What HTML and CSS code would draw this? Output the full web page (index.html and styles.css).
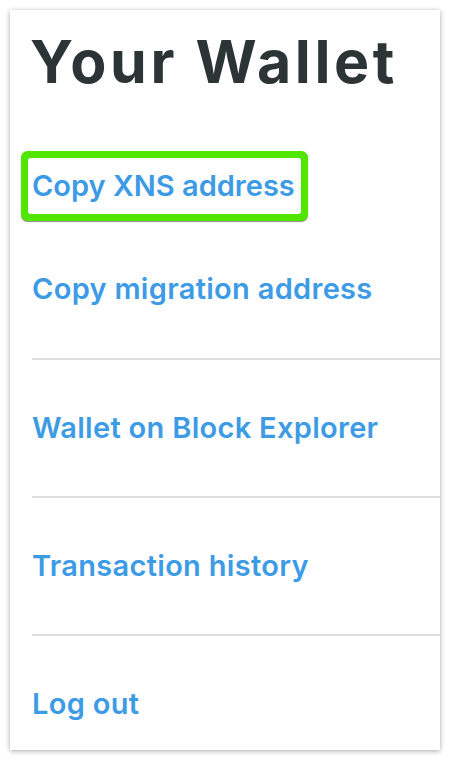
FILE: index.html
```html
<!DOCTYPE html>
<html lang="en">
<head>
<meta charset="utf-8">
<title>Your Wallet</title>
<link rel="stylesheet" href="styles.css">
</head>
<body>
<div class="card">
  <h1 class="title">Your Wallet</h1>
  <ul class="menu">
    <li class="menu-group">
      <a class="menu-link menu-link--focused" href="#">Copy XNS address</a>
      <a class="menu-link" href="#">Copy migration address</a>
    </li>
    <li class="menu-item"><a class="menu-link" href="#">Wallet on Block Explorer</a></li>
    <li class="menu-item"><a class="menu-link" href="#">Transaction history</a></li>
    <li class="menu-item menu-item--last"><a class="menu-link" href="#">Log out</a></li>
  </ul>
</div>
</body>
</html>
```

FILE: styles.css
```css
* { box-sizing: border-box; }

html, body {
  margin: 0;
  background: #ffffff;
}

body {
  padding: 10px;
  font-family: Inter, "Open Sans", sans-serif;
}

.card {
  width: 430px;
  height: 740px;
  background: #ffffff;
  box-shadow: 0 1px 5px rgba(0, 0, 0, 0.35);
  padding: 16px 0 0 22px;
  overflow: hidden;
}

.title {
  margin: 0 0 0 -2px;
  font-size: 59px;
  line-height: 71px;
  font-weight: 700;
  letter-spacing: 3.6px;
  color: #2d3436;
}

.menu {
  list-style: none;
  margin: 0;
  padding: 0;
}

.menu-group {
  display: flex;
  flex-direction: column;
  align-items: flex-start;
  gap: 47px;
  padding: 61px 0 41px;
  border-bottom: 2px solid #dedede;
}

.menu-item {
  display: flex;
  padding: 40px 0;
  border-bottom: 2px solid #dedede;
}

.menu-item--last {
  border-bottom: none;
}

.menu-link {
  display: inline-block;
  margin-left: -4px;
  padding: 0 6px 0 4px;
  font-size: 29px;
  line-height: 56px;
  font-weight: 600;
  letter-spacing: 0.3px;
  color: #3d9be6;
  text-decoration: none;
  white-space: nowrap;
}

.menu-link--focused {
  letter-spacing: 0;
  border-radius: 2px;
  box-shadow: 0 0 0 7px #52e500, 0 1px 1px 7px rgba(0, 0, 0, 0.45);
}
```
